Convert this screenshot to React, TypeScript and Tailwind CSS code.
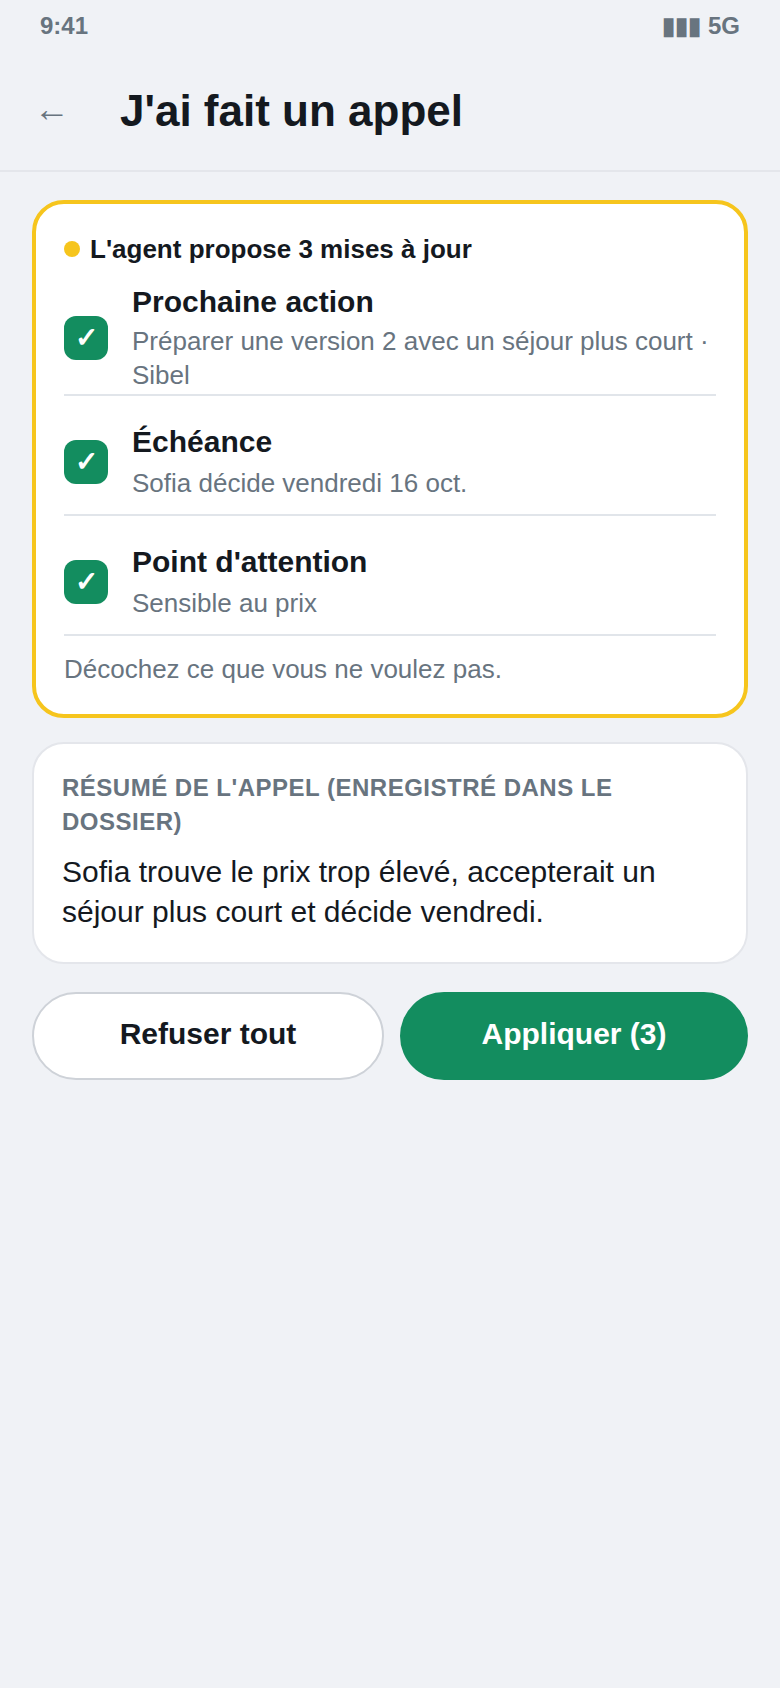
const items = [
  { title: "Prochaine action", detail: "Préparer une version 2 avec un séjour plus court · Sibel", row: "pb-[2px]", gap: "mt-[3px]", lift: "pt-px", box: "mt-[2px]" },
  { title: "Échéance", detail: "Sofia décide vendredi 16 oct.", row: "pt-[27px] pb-[14px]", gap: "mt-[5px]", lift: "", box: "" },
  { title: "Point d'attention", detail: "Sensible au prix", row: "pt-[27px] pb-[14px]", gap: "mt-[5px]", lift: "", box: "" },
];

function Proposal({ title, detail, row, gap, lift, box }: { title: string; detail: string; row: string; gap: string; lift: string; box: string }) {
  return (
    <div className={`flex items-center gap-6 border-b-2 border-[#e1e5ea] ${row}`}>
      <div className={`flex h-11 w-11 shrink-0 items-center justify-center rounded-xl bg-[#138d5f] text-[28px] font-bold leading-none text-white ${box}`}>
        ✓
      </div>
      <div className={`min-w-0 flex-1 ${lift}`}>
        <div className="text-[30px] font-bold leading-[38px] text-[#14191f]">{title}</div>
        <div className={`${gap} text-[26px] leading-[34px] text-[#68747f]`}>{detail}</div>
      </div>
    </div>
  );
}

export default function App() {
  return (
    <div className="min-h-[1688px] bg-[#f0f2f6] font-['Liberation_Sans',Arial,sans-serif]">
      <div className="flex h-[52px] items-center justify-between px-10 text-[24px] font-bold text-[#68747f]">
        <span>9:41</span>
        <span>▮▮▮ 5G</span>
      </div>
      <header className="flex h-[120px] items-center border-b-2 border-[#e4e6eb] pl-8">
        <span className="w-[88px] pb-1 pl-[2px] text-[36px] leading-none text-[#68747f]">←</span>
        <h1 className="text-[44px] font-bold text-[#14191f]">J'ai fait un appel</h1>
      </header>
      <main className="flex flex-col gap-6 px-8 pt-7">
        <section className="rounded-[32px] border-4 border-[#f6c51d] bg-white px-7 pt-7 pb-7">
          <div className="mb-4 flex items-center gap-[10px] text-[26px] font-bold leading-[34px] text-[#14191f]">
            <span className="h-4 w-4 rounded-full bg-[#f6c51d]" />
            L'agent propose 3 mises à jour
          </div>
          {items.map((item) => (
            <Proposal key={item.title} {...item} />
          ))}
          <p className="mt-4 text-[26px] leading-[34px] text-[#68747f]">Décochez ce que vous ne voulez pas.</p>
        </section>
        <section className="rounded-[32px] border-2 border-[#e4e6eb] bg-white px-7 pt-[27px] pb-[30px]">
          <h2 className="text-[24px] font-bold uppercase leading-[34px] tracking-[0.5px] text-[#68747f]">
            Résumé de l'appel (enregistré dans le dossier)
          </h2>
          <p className="mt-[13px] text-[30px] leading-10 text-[#14191f]">
            Sofia trouve le prix trop élevé, accepterait un séjour plus court et décide vendredi.
          </p>
        </section>
        <div className="flex gap-4 pt-1">
          <button className="h-[88px] flex-1 rounded-[44px] border-2 border-[#ced2d8] bg-white pb-[6px] text-[30px] font-bold text-[#14191f]">
            Refuser tout
          </button>
          <button className="h-[88px] flex-1 rounded-[44px] bg-[#138d5f] pb-[6px] text-[30px] font-bold text-white">
            Appliquer (3)
          </button>
        </div>
      </main>
    </div>
  );
}
